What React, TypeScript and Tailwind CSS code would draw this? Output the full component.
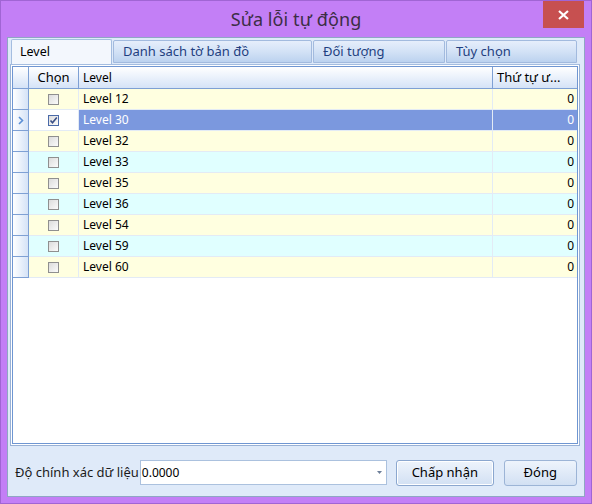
import React from "react";

const ROWS = [
  { name: "Level 12", val: 0, checked: false },
  { name: "Level 30", val: 0, checked: true },
  { name: "Level 32", val: 0, checked: false },
  { name: "Level 33", val: 0, checked: false },
  { name: "Level 35", val: 0, checked: false },
  { name: "Level 36", val: 0, checked: false },
  { name: "Level 54", val: 0, checked: false },
  { name: "Level 59", val: 0, checked: false },
  { name: "Level 60", val: 0, checked: false },
];
const SELECTED = 1;

const TABS = [
  { label: "Level", w: "w-[101px]" },
  { label: "Danh sách tờ bản đồ", w: "w-[199px]" },
  { label: "Đối tượng", w: "w-[132px]" },
  { label: "Tùy chọn", w: "w-[131px]" },
];

function CheckBox({ checked }: { checked: boolean }) {
  return (
    <div
      className={`w-[11px] h-[11px] border ${checked ? "border-[#4a6aa8]" : "border-[#8f8f8f]"} bg-gradient-to-br from-[#dcdcdc] to-[#fbfbfb] flex items-center justify-center relative`}
    >
      {checked && (
        <svg width="9" height="9" viewBox="0 0 9 9" className="absolute">
          <path d="M1.5 4.5 L3.5 6.8 L7.8 1.5" fill="none" stroke="#3a4f86" strokeWidth="1.6" />
        </svg>
      )}
    </div>
  );
}

export default function App() {
  return (
    <div
      className="w-[592px] h-[504px] bg-[#c37ff6] border border-[#a065d4] flex flex-col overflow-hidden"
      style={{ fontFamily: '"Noto Sans", "Open Sans", sans-serif' }}
    >
      {/* Title bar */}
      <div className="h-[36px] shrink-0 relative flex items-center justify-center">
        <span className="text-[18px] text-[#3c2e45] tracking-[0.1px]">Sửa lỗi tự động</span>
        <button className="absolute right-[7px] top-0 w-[41px] h-[27px] bg-[#c75050] flex items-center justify-center">
          <svg width="11" height="10" viewBox="0 0 11 10">
            <path d="M1 1 L10 9 M10 1 L1 9" stroke="#fff" strokeWidth="2.2" />
          </svg>
        </button>
      </div>

      {/* Client area */}
      <div className="flex-1 mx-[6px] mb-[6px] border border-[#8fa6c4] bg-[#dfeaf9] flex flex-col min-h-0 p-[1px]">
        {/* Tabs */}
        <div className="flex items-end h-[25px] pl-[2px] gap-[1px] shrink-0">
          {TABS.map((t, i) =>
            i === 0 ? (
              <div
                key={t.label}
                className={`${t.w} h-[25px] bg-[#f3f7fd] border border-b-0 border-[#a4bde0] rounded-t-[2px] flex items-center pl-[8px] text-[12.5px] text-black`}
              >
                {t.label}
              </div>
            ) : (
              <div
                key={t.label}
                className={`${t.w} h-[23px] mb-[1px] bg-gradient-to-b from-[#e6eefb] via-[#d3e2f6] to-[#bcd2ef] border border-[#a2bade] rounded-t-[2px] flex items-center pl-[9px] text-[13px] text-[#1f3f80]`}
              >
                {t.label}
              </div>
            )
          )}
        </div>

        {/* Grid */}
        <div className="flex-1 mx-[1px] mr-[3px] border border-[#98b1d6] bg-white flex flex-col min-h-0 border-t-[#a4bde0]">
          <div className="m-[1px] flex-1 border border-[#6f96d2] flex flex-col text-[12px]">
            {/* header */}
            <div className="flex h-[22px] shrink-0 bg-gradient-to-b from-[#ffffff] to-[#d5e3f7] border-b border-[#7ea0d4]">
              <div className="w-[16px] border-r border-[#7ea0d4]" />
              <div className="w-[50px] border-r border-[#7ea0d4] flex items-center justify-center text-[13px] text-black">Chọn</div>
              <div className="flex-1 border-r border-[#7ea0d4] flex items-center pl-[4px] text-black">Level</div>
              <div className="w-[84px] flex items-center pl-[4px] text-[13px] text-black">Thứ tự ư...</div>
            </div>
            {/* rows */}
            {ROWS.map((r, i) => {
              const sel = i === SELECTED;
              const bg = i % 2 === 0 ? "bg-[#ffffe0]" : "bg-[#e0ffff]";
              return (
                <div key={r.name} className="flex h-[21px] shrink-0">
                  <div className="w-[16px] bg-gradient-to-r from-[#ffffff] to-[#d5e3f7] border-r border-b border-[#7ea0d4] flex items-center justify-center">
                    {sel && (
                      <svg width="6" height="9" viewBox="0 0 6 9">
                        <path d="M1 1 L4.5 4.5 L1 8" fill="none" stroke="#5b8fd6" strokeWidth="1.6" />
                      </svg>
                    )}
                  </div>
                  <div className={`w-[50px] ${sel ? "bg-white" : bg} border-r border-b border-[#e3ebf5] flex items-center justify-center`}>
                    <CheckBox checked={r.checked} />
                  </div>
                  <div
                    className={`flex-1 ${sel ? "bg-[#7b98de] text-white" : `${bg} text-black`} border-r border-b border-[#e3ebf5] flex items-center pl-[4px]`}
                  >
                    {r.name}
                  </div>
                  <div
                    className={`w-[84px] ${sel ? "bg-[#7b98de] text-white" : `${bg} text-black`} border-b border-[#e3ebf5] flex items-center justify-end pr-[3px]`}
                  >
                    {r.val}
                  </div>
                </div>
              );
            })}
            <div className="flex-1 bg-white" />
          </div>
        </div>

        {/* Bottom panel */}
        <div className="h-[49px] shrink-0 flex items-center pl-[6px] pr-[5px] pt-[4px]">
          <span className="text-[13px] text-[#1b1b1b] whitespace-nowrap">Độ chính xác dữ liệu</span>
          <div className="ml-[1px] w-[247px] h-[25px] bg-white border border-[#abc1de] flex items-center pl-[1px] pr-[4px] text-[12px] text-black">
            <span className="flex-1">0.0000</span>
            <svg width="5" height="3" viewBox="0 0 5 3">
              <path d="M0 0 H5 L2.5 3 Z" fill="#6d7f99" />
            </svg>
          </div>
          <button className="ml-[9px] w-[98px] h-[26px] rounded-[3px] border border-[#8ba7cf] bg-gradient-to-b from-[#eef4fc] to-[#d2e0f3] text-[13px] text-black flex items-center justify-center shadow-[inset_0_0_0_1px_#ffffff]">
            Chấp nhận
          </button>
          <button className="ml-[10px] w-[73px] h-[26px] rounded-[3px] border border-[#9cb4d6] bg-gradient-to-b from-[#eef4fc] to-[#d2e0f3] text-[13px] text-black flex items-center justify-center">
            Đóng
          </button>
        </div>
      </div>
    </div>
  );
}
